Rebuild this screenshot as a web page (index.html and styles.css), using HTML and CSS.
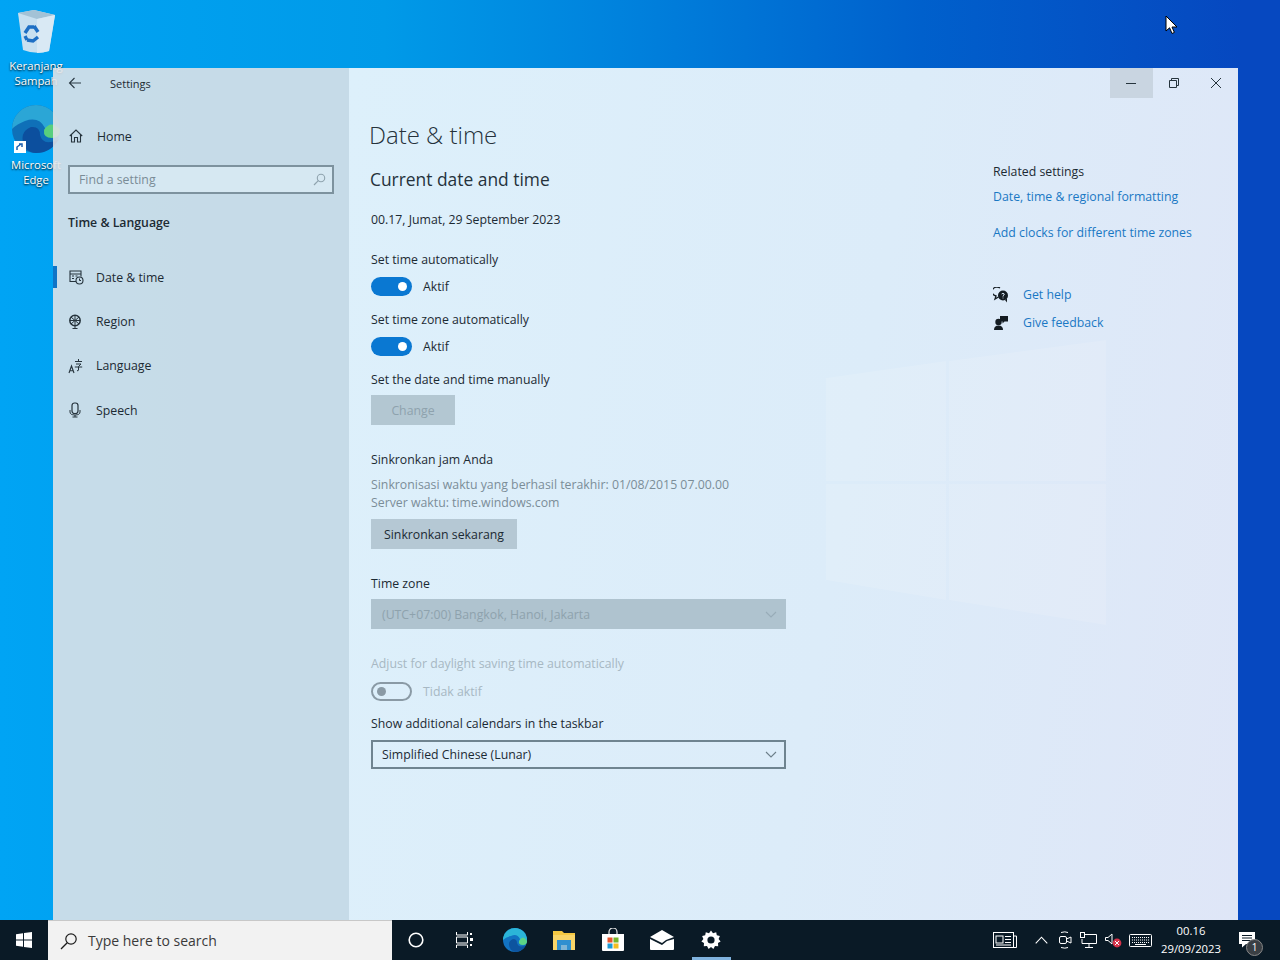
FILE: index.html
```html
<!DOCTYPE html>
<html lang="id">
<head>
<meta charset="utf-8">
<title>Settings</title>
<link rel="stylesheet" href="styles.css">
</head>
<body>
<div class="screen">
  <div class="desktop">
    <div class="desk-icon recycle">
      <svg class="desk-glyph" width="48" height="48" viewBox="0 0 48 48"><path d="M6 5 L22 2 L43 7 L37 43 Q24 47 11 42Z" fill="#c8e0f0"/><path d="M6 5 L22 2 L43 7 L25 11Z" fill="#a3c2d6"/><path d="M25 11 L43 7 L37 43 Q31 45 25 45Z" fill="#d9e9f4"/><g fill="none" stroke="#1e6fc4" stroke-width="3.4"><path d="M13 25 L17 19 L22 19"/><path d="M22 18 L26 24"/><path d="M26 29 L21 33 L15 32"/><path d="M13 28 L15 32"/></g></svg>
      <span>Keranjang<br>Sampah</span>
    </div>
    <div class="desk-icon edge">
      <svg class="desk-glyph" width="48" height="48" viewBox="0 0 48 48"><circle cx="24" cy="24" r="24" fill="#0f70b8"/><path d="M0 24 A24 24 0 0 1 48 24 Q48 32 40 32 Q31 32 33 23 Q27 11 13 16 Q5 19 0 24Z" fill="#2ba6d6"/><path d="M48 25 Q48 33 40 33 Q31 33 32 25 Q39 14 48 25Z" fill="#58cf7d"/><path d="M13 43 Q6 27 19 22 Q28 21 28 30 Q31 42 47 34 Q39 48 24 48 Q18 48 13 43Z" fill="#0c4f9e"/><rect x="2" y="36" width="12" height="12" fill="#fff"/><path d="M5 45 L5 42 L9 39 M7 39 L10 39 L10 42" fill="none" stroke="#1b5fb0" stroke-width="1.5"/></svg>
      <span>Microsoft<br>Edge</span>
    </div>
    <svg class="cursor" width="14" height="20" viewBox="0 0 14 20"><path d="M1 1 L1 16 L4.6 12.8 L7 18.5 L9.4 17.4 L7 12 L12 12Z" fill="#fff" stroke="#000"/></svg>

    <section class="window">
      <aside class="side">
        <header class="side-top">
          <svg class="back" width="14" height="14" viewBox="0 0 14 14"><path d="M13 7 H1.5 M6.5 2 L1.5 7 L6.5 12" fill="none" stroke="#2b3a44" stroke-width="1.1"/></svg>
          <span class="app-name">Settings</span>
        </header>
        <div class="home">
          <svg width="14" height="14" viewBox="0 0 14 14"><path d="M0.8 7 L7 1 L13.2 7 M2.5 5.8 V13 H5.5 V8.5 H8.5 V13 H11.5 V5.8" fill="none" stroke="#26343d" stroke-width="1.1"/></svg>
          <span>Home</span>
        </div>
        <div class="search">
          <span>Find a setting</span>
          <svg width="13" height="13" viewBox="0 0 13 13"><circle cx="8" cy="5" r="3.7" fill="none" stroke="#8fa3ae" stroke-width="1.1"/><path d="M5.3 7.7 L1 12" stroke="#8fa3ae" stroke-width="1.2"/></svg>
        </div>
        <div class="group-title">Time &amp; Language</div>
        <nav class="nav">
          <div class="nav-item active">
            <svg width="16" height="16" viewBox="0 0 16 16"><path d="M8 12.5 H2 V2 H13 V7.5 M2 5 H13" fill="none" stroke="#26343d" stroke-width="1.1"/><path d="M4 7 H6 M7.5 7 H9.5 M4 9.5 H6" stroke="#26343d"/><circle cx="11.5" cy="11.5" r="3.5" fill="none" stroke="#26343d" stroke-width="1.1"/><path d="M11.5 9.5 V11.5 H13" fill="none" stroke="#26343d"/></svg>
            <span>Date &amp; time</span>
          </div>
          <div class="nav-item">
            <svg width="16" height="16" viewBox="0 0 16 16"><circle cx="7" cy="6.5" r="5.2" fill="none" stroke="#26343d" stroke-width="1.5"/><path d="M3 3 L11 10 M11 3 L3 10 M7 1.5 V11.5 M2 6.5 H12" stroke="#26343d" stroke-width="1"/><path d="M7 12 V14 M4.5 14.5 H9.5" stroke="#26343d"/></svg>
            <span>Region</span>
          </div>
          <div class="nav-item">
            <svg width="16" height="16" viewBox="0 0 16 16"><path d="M1 15 L3.5 8 L6 15 M2 12.8 H5" fill="none" stroke="#26343d" stroke-width="1.1"/><path d="M7 3.5 H14 M10.5 1 V3.5 M8 6 H13 L10.5 8.5 V12 Q10.5 13 9 12.7 M6.8 9 H14.2" fill="none" stroke="#26343d"/></svg>
            <span>Language</span>
          </div>
          <div class="nav-item">
            <svg width="16" height="16" viewBox="0 0 16 16"><rect x="4" y="1" width="6" height="10.5" rx="2.5" fill="none" stroke="#26343d" stroke-width="1.2"/><path d="M2 8 V10 Q2 13 7 13 Q12 13 12 10 V8 M7 13 V15 M4.5 15 H9.5" fill="none" stroke="#26343d"/></svg>
            <span>Speech</span>
          </div>
        </nav>
      </aside>

      <main class="main">
        <svg class="glass-logo" width="284" height="290" viewBox="0 0 284 290"><path d="M2 38 L122 21 V141 H2Z M125 21 L282 0 V141 H125Z M2 144 H122 V260 L2 240Z M125 144 H282 V285 L125 260Z" fill="#fff" fill-opacity=".12"/></svg>
        <div class="caption-bar">
          <div class="cap-btn hovered"><svg width="10" height="10" viewBox="0 0 10 10"><path d="M0 5.5 H10" stroke="#26343d"/></svg></div>
          <div class="cap-btn"><svg width="10" height="10" viewBox="0 0 10 10"><path d="M.5 2.5 H7.5 V9.5 H.5Z M2.5 2.5 V.5 H9.5 V7.5 H7.5" fill="none" stroke="#26343d"/></svg></div>
          <div class="cap-btn last"><svg width="10" height="10" viewBox="0 0 10 10"><path d="M0 0 L10 10 M10 0 L0 10" stroke="#26343d"/></svg></div>
        </div>
        <div class="main-body">
          <div class="content">
            <h1>Date &amp; time</h1>
            <h2>Current date and time</h2>
            <p class="now">00.17, Jumat, 29 September 2023</p>

            <div class="label first">Set time automatically</div>
            <div class="toggle-row"><span class="toggle on"><i></i></span><span>Aktif</span></div>
            <div class="label">Set time zone automatically</div>
            <div class="toggle-row"><span class="toggle on"><i></i></span><span>Aktif</span></div>
            <div class="label">Set the date and time manually</div>
            <div class="btn disabled change">Change</div>

            <div class="label sync-title">Sinkronkan jam Anda</div>
            <div class="muted sync-line">Sinkronisasi waktu yang berhasil terakhir: 01/08/2015 07.00.00</div>
            <div class="muted sync-line">Server waktu: time.windows.com</div>
            <div class="btn sync-btn">Sinkronkan sekarang</div>

            <div class="label tz-label">Time zone</div>
            <div class="select disabled"><span>(UTC+07:00) Bangkok, Hanoi, Jakarta</span>
              <svg width="12" height="7" viewBox="0 0 12 7"><path d="M1 1 L6 6 L11 1" fill="none" stroke="#98acb8" stroke-width="1.1"/></svg></div>

            <div class="label dim dst">Adjust for daylight saving time automatically</div>
            <div class="toggle-row dim-row"><span class="toggle off"><i></i></span><span>Tidak aktif</span></div>
            <div class="label cal-label">Show additional calendars in the taskbar</div>
            <div class="select active"><span>Simplified Chinese (Lunar)</span>
              <svg width="12" height="7" viewBox="0 0 12 7"><path d="M1 1 L6 6 L11 1" fill="none" stroke="#6d7f8a" stroke-width="1.1"/></svg></div>
          </div>
          <aside class="related">
            <div class="rel-title">Related settings</div>
            <a class="rel-link">Date, time &amp; regional formatting</a>
            <a class="rel-link second">Add clocks for different time zones</a>
            <div class="help first-help">
              <svg width="16" height="16" viewBox="0 0 16 16"><path d="M7 1 A5 4.5 0 1 0 3 9 L2 12 L5.5 10" fill="none" stroke="#141c22" stroke-width="1.3"/><circle cx="10" cy="8.5" r="5" fill="#141c22"/><path d="M12 13 L14 15.5 V11Z" fill="#141c22"/><path d="M8.6 7 Q10 5.6 11.3 7 Q11.3 8 10 8.8 V9.6 M10 10.6 V11.4" fill="none" stroke="#dbeaf8"/></svg>
              <a>Get help</a>
            </div>
            <div class="help">
              <svg width="16" height="16" viewBox="0 0 16 16"><circle cx="5.5" cy="7" r="3.2" fill="#141c22"/><path d="M1 15 Q1 10.5 5.5 10.5 Q10 10.5 10 15Z" fill="#141c22"/><path d="M7 1 H15 V6.5 H11.5 L9.5 8.5 V6.5 H7Z" fill="#141c22"/></svg>
              <a>Give feedback</a>
            </div>
          </aside>
        </div>
      </main>
    </section>
  </div>

  <footer class="taskbar">
    <div class="start"><svg width="16" height="16" viewBox="0 0 16 16"><path d="M0 2.2 L7 1.2 V7.5 H0Z M8 1 L16 0 V7.5 H8Z M0 8.5 H7 V14.8 L0 13.8Z M8 8.5 H16 V16 L8 15Z" fill="#fff"/></svg></div>
    <div class="task-search">
      <svg width="18" height="18" viewBox="0 0 18 18"><circle cx="11" cy="7" r="5.2" fill="none" stroke="#1c1c1c" stroke-width="1.2"/><path d="M7.2 10.8 L1 17" stroke="#1c1c1c" stroke-width="1.3"/></svg>
      <span>Type here to search</span>
    </div>
    <div class="task-icons">
      <div class="task-icon"><svg width="16" height="16" viewBox="0 0 16 16"><circle cx="8" cy="8" r="6.8" fill="none" stroke="#fff" stroke-width="1.6"/></svg></div>
      <div class="task-icon"><svg width="18" height="16" viewBox="0 0 18 16"><path d="M.5 0 V3 H11.5 V0 M.5 5 H11.5 V11 H.5Z M.5 16 V13 H11.5 V16" stroke="#fff" fill="none"/><rect x="14" y="1" width="2" height="2" fill="#fff"/><rect x="14" y="6" width="3" height="3" fill="#fff"/><rect x="14" y="12" width="2" height="2" fill="#fff"/></svg></div>
      <div class="task-icon"><svg width="24" height="24" viewBox="0 0 24 24"><circle cx="12" cy="12" r="12" fill="#1273c2"/><path d="M0 12 A12 12 0 0 1 24 12 Q24 16 20 16 Q15 16 17 11 Q14 5 8 8 Q3 9 0 12Z" fill="#2bb5d8"/><path d="M24 13 Q24 17 20 17 Q15 17 16 13 Q20 6 24 13Z" fill="#5bd486"/><path d="M8 22 Q3 14 10 11 Q14 11 14 15 Q16 21 23 17 Q19 24 12 24Z" fill="#0d549f"/></svg></div>
      <div class="task-icon"><svg width="22" height="20" viewBox="0 0 22 20"><path d="M0 1 H9 L11 3 H22 V20 H0Z" fill="#f5c842"/><path d="M0 5 H22 V20 H0Z" fill="#f9d568"/><path d="M4 20 V10 H18 V20 H14 V15 H8 V20Z" fill="#2f8fd0"/><rect x="8" y="15" width="6" height="5" fill="#7fb5d6"/></svg></div>
      <div class="task-icon"><svg width="24" height="24" viewBox="0 0 24 24"><path d="M8 6 V4 A4 4 0 0 1 16 4 V6" fill="none" stroke="#e8e8e8" stroke-width="1.2"/><path d="M1 6 H23 V22 Q23 23 22 23 H2 Q1 23 1 22Z" fill="#fff"/><rect x="6.5" y="9.5" width="5" height="5" fill="#e8552d"/><rect x="12.5" y="9.5" width="5" height="5" fill="#76b52a"/><rect x="6.5" y="15.5" width="5" height="5" fill="#1d9ad6"/><rect x="12.5" y="15.5" width="5" height="5" fill="#f5bd20"/></svg></div>
      <div class="task-icon"><svg width="26" height="20" viewBox="0 0 26 20"><path d="M1 7 L13 0 L25 7 L17 10 L13 13 L1 7Z" fill="#fff"/><path d="M1 9 L13 15 L18 11 L25 9 V19 Q25 20 24 20 H2 Q1 20 1 19Z" fill="#fff"/></svg></div>
      <div class="task-icon running"><svg width="20" height="20" viewBox="0 0 20 20"><path d="M10 .6 L12 3.2 L15.2 2.2 L15.8 5.2 L18.9 6 L17.6 9 L19.6 11.4 L17 13 L17.2 16.2 L14 16 L12.4 19 L10 17 L7.6 19 L6 16 L2.8 16.2 L3 13 L.4 11.4 L2.4 9 L1.1 6 L4.2 5.2 L4.8 2.2 L8 3.2Z" fill="#fff"/><circle cx="10" cy="10" r="3.6" fill="#0a1a26"/></svg></div>
    </div>
    <div class="tray">
      <svg class="t-news" width="24" height="16" viewBox="0 0 24 16"><rect x=".5" y=".5" width="20" height="15" fill="none" stroke="#fff"/><path d="M20.5 4 H23.5 V15.5 H20.5" fill="none" stroke="#fff"/><rect x="3" y="4" width="7" height="7" fill="none" stroke="#fff"/><path d="M12 4.5 H18 M12 7.5 H18 M12 10.5 H18 M3 13 H18" stroke="#fff"/></svg>
      <svg class="t-chev" width="13" height="8" viewBox="0 0 13 8"><path d="M.7 7.3 L6.5 1.2 L12.3 7.3" fill="none" stroke="#fff" stroke-width="1.1"/></svg>
      <svg class="t-meet" width="14" height="18" viewBox="0 0 14 18"><path d="M3 1.5 Q7 .2 10 1.5 M3 16.5 Q7 17.8 10 16.5" fill="none" stroke="#fff"/><rect x="1.5" y="5.5" width="7" height="7" rx="1.5" fill="none" stroke="#fff"/><path d="M8.5 8 L13 6 V12 L8.5 10" fill="none" stroke="#fff"/></svg>
      <svg class="t-net" width="17" height="16" viewBox="0 0 17 16"><path d="M4 2.5 H16.5 V11.5 H2 V7" fill="none" stroke="#fff"/><rect x=".5" y=".5" width="4" height="5" fill="none" stroke="#fff"/><path d="M9 11.5 V15 M5 15.5 H13" stroke="#fff"/></svg>
      <svg class="t-vol" width="17" height="16" viewBox="0 0 17 16"><path d="M.5 5.5 H3 L7 2 V12 L3 8.5 H.5Z" fill="none" stroke="#fff"/><circle cx="12" cy="11" r="4.4" fill="#d6324a"/><path d="M10 9 L14 13 M14 9 L10 13" stroke="#fff"/></svg>
      <svg class="t-kbd" width="23" height="13" viewBox="0 0 23 13"><rect x=".5" y=".5" width="22" height="12" rx="1" fill="none" stroke="#fff"/><path d="M3 3.5 H20 M3 6 H20 M3 8.5 H20" stroke="#fff" stroke-dasharray="1 1"/><path d="M6 10.5 H17" stroke="#fff"/></svg>
      <div class="clock"><span>00.16</span><span>29/09/2023</span></div>
      <div class="notif">
        <svg width="17" height="16" viewBox="0 0 17 16"><path d="M0 0 H16 V12 H7 L3 15.5 V12 H0Z" fill="#fff"/><path d="M3 3.5 H13 M3 6 H13 M3 8.5 H13" stroke="#0a1a26"/></svg>
        <span class="badge">1</span>
      </div>
    </div>
  </footer>
</div>
</body>
</html>
```

FILE: styles.css
```css
* { box-sizing: border-box; }
html, body { margin: 0; padding: 0; height: 100%; }
body { font-family: "Open Sans", "Noto Sans", "Liberation Sans", sans-serif; color: #1c2a33; font-size: 12.3px; overflow: hidden; }
.screen { width: 1280px; height: 960px; display: flex; flex-direction: column; }

.desktop { flex: 1; position: relative; background: linear-gradient(90deg, #00a4f4 0%, #009ae8 30%, #0080dc 50%, #0060cc 72%, #0648c0 97%); overflow: hidden; }
.desk-icon { position: absolute; left: 0; width: 72px; display: flex; flex-direction: column; align-items: center; color: #fff; font-size: 11.3px; line-height: 15px; text-align: center; text-shadow: 0 1px 2px #000; }
.recycle { top: 8px; }
.edge { top: 105px; }
.desk-icon span { margin-top: 2px; }
.edge span { margin-top: 4px; }
.desk-glyph { width: 48px; height: 48px; }
.cursor { position: absolute; left: 1165px; top: 15px; }

.window { position: absolute; left: 53px; top: 68px; width: 1185px; height: 852px; display: flex; }
.side { width: 296px; background: rgba(225, 228, 231, .88); display: flex; flex-direction: column; }
.side-top { display: flex; align-items: center; height: 30px; padding-left: 15px; }
.app-name { font-size: 11px; margin-left: 28px; }
.home { display: flex; align-items: center; gap: 14px; margin-top: 26px; padding-left: 16px; height: 24px; }
.search { display: flex; justify-content: space-between; align-items: center; margin: 17px 15px 0; height: 29px; padding: 0 6px 0 9px; border: 2px solid #7d929e; background: #d6e8f2; color: #7a8c97; }
.group-title { font-weight: 600; margin: 19px 0 0 15px; line-height: 20px; }
.nav { margin-top: 22px; display: flex; flex-direction: column; }
.nav-item { display: flex; align-items: center; gap: 12px; height: 44.4px; padding-left: 15px; position: relative; }
.nav-item.active::before { content: ""; position: absolute; left: 0; top: 11px; width: 4px; height: 22px; background: #0f74c6; }

.main { flex: 1; position: relative; background: linear-gradient(100deg, #ddf0fb 0%, #dcecf9 55%, #dfe6f7 100%); display: flex; flex-direction: column; }
.glass-logo { position: absolute; left: 475px; top: 272px; }
.caption-bar { display: flex; justify-content: flex-end; height: 30px; position: relative; }
.cap-btn { width: 43px; height: 30px; padding-right: 2px; display: flex; align-items: center; justify-content: center; }
.cap-btn.last { width: 42px; }
.cap-btn.hovered { background: #c9d5e1; }
.main-body { display: flex; position: relative; flex: 1; }
.content { width: 644px; padding-left: 22px; }
h1 { font-weight: 300; font-size: 24px; line-height: 32px; margin: 21px 0 0 -2px; color: #25323b; }
h2 { font-weight: 400; font-size: 17.4px; line-height: 24px; margin: 16px 0 0 -1px; color: #25323b; }
.now { margin: 19px 0 0; line-height: 20px; }
.label { height: 20px; line-height: 22px; margin-top: 8px; }
.label.first { margin-top: 19px; }
.toggle-row { display: flex; align-items: center; gap: 11px; height: 30px; margin-top: 2px; }
.toggle { width: 41px; height: 19px; border-radius: 10px; display: flex; align-items: center; }
.toggle i { width: 9px; height: 9px; border-radius: 50%; }
.toggle.on { background: #0a78d2; justify-content: flex-end; padding-right: 5px; }
.toggle.on i { background: #fff; }
.toggle.off { border: 2px solid #8a9aa5; padding-left: 4px; }
.toggle.off i { background: #8a9aa5; }
.btn { display: flex; align-items: center; justify-content: center; height: 30px; }
.btn.change { width: 84px; margin-top: 6px; }
.btn.disabled { background: #b3c7d2; color: #8ea2ad; }
.label.sync-title { margin-top: 24px; }
.muted { color: #7b8d98; height: 18px; line-height: 20px; }
.sync-title + .sync-line { margin-top: 6px; }
.sync-btn { width: 146px; margin-top: 8px; background: #b5c8d4; color: #1c2a33; }
.label.tz-label { margin-top: 24px; }
.select { display: flex; justify-content: space-between; align-items: center; width: 415px; height: 30px; margin-top: 6px; padding: 0 9px 0 11px; }
.select.disabled { background: #afc3cf; color: #8ea2ad; }
.select.active { border: 2px solid #6f8490; height: 29px; padding: 0 7px 0 9px; margin-top: 7px; }
.label.dst { margin-top: 24px; }
.dim { color: #a7b8c3; }
.toggle-row.dim-row { color: #a7b8c3; margin-top: 3px; }
.label.cal-label { margin-top: 7px; }
.related { padding-top: 64px; display: flex; flex-direction: column; align-items: flex-start; }
.rel-title { line-height: 20px; }
.rel-link { color: #1a78c4; line-height: 20px; margin-top: 5px; }
.rel-link.second { margin-top: 16px; }
.help { display: flex; align-items: center; gap: 14px; line-height: 20px; color: #1a78c4; margin-top: 8px; }
.help.first-help { margin-top: 42px; }

.taskbar { height: 40px; background: #0a1a26; display: flex; align-items: center; }
.start { width: 48px; display: flex; justify-content: center; align-items: center; }
.task-search { width: 344px; height: 40px; background: #f2f2f2; display: flex; align-items: center; gap: 10px; padding-left: 12px; font-size: 14px; color: #3a3a3a; border-top: 1px solid #c8c8c8; }
.task-icons { display: flex; margin-left: -0.4px; }
.task-icon { width: 49.2px; height: 40px; display: flex; align-items: center; justify-content: center; position: relative; }
.task-icon.running::after { content: ""; position: absolute; left: 5px; right: 5px; bottom: 0; height: 3px; background: #7fb2de; }
.tray { margin-left: auto; display: flex; align-items: center; color: #fff; height: 40px; }
.tray svg { display: block; }
.t-chev { margin-left: 18px; }
.t-meet { margin-left: 10px; }
.t-net { margin-left: 8px; }
.t-vol { margin-left: 8px; }
.t-kbd { margin-left: 7px; }
.clock { display: flex; flex-direction: column; align-items: center; font-size: 11.3px; line-height: 18px; margin-left: 10px; width: 58px; white-space: nowrap; }
.notif { position: relative; width: 60px; height: 40px; display: flex; align-items: center; padding-left: 19px; }
.badge { position: absolute; left: 26px; top: 19px; width: 17px; height: 17px; border-radius: 50%; background: #3a3f44; border: 1px solid #888; font-size: 10px; line-height: 15px; text-align: center; }
```
